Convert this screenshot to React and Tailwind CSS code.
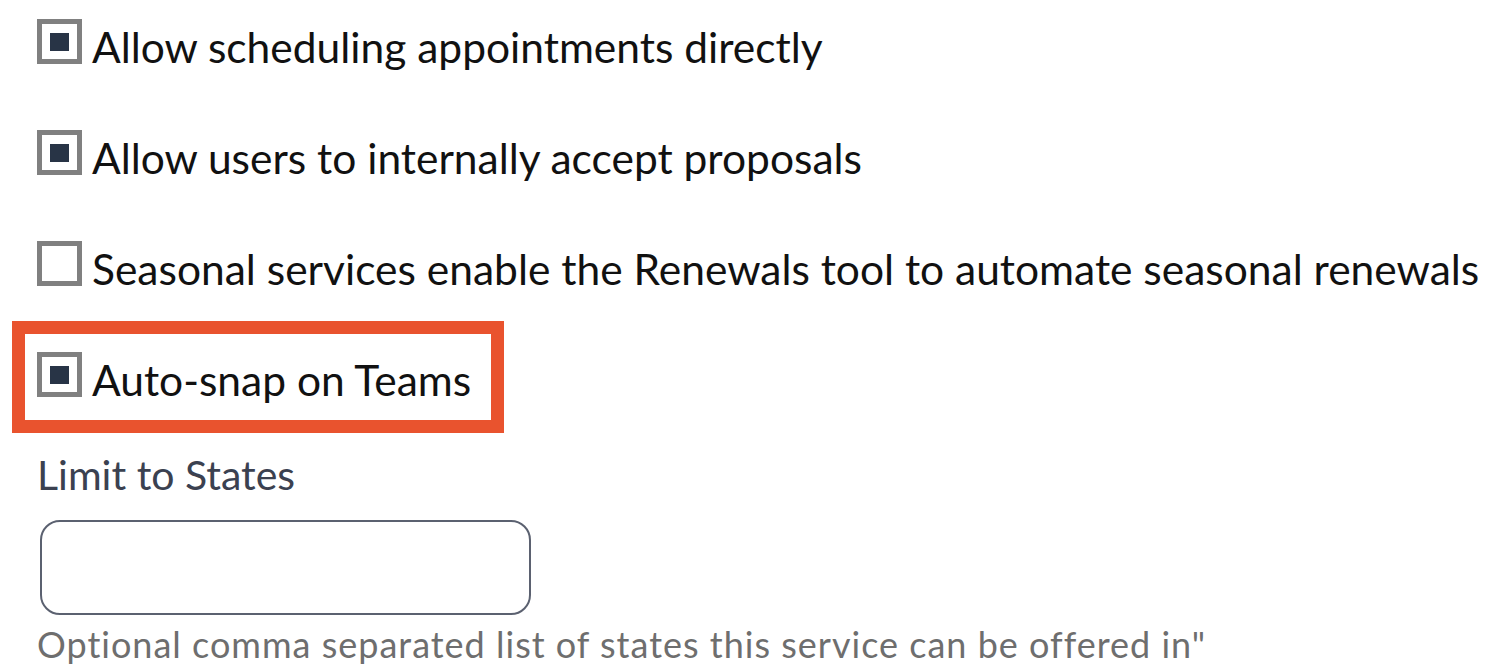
const options = [
  { label: "Allow scheduling appointments directly", checked: true },
  { label: "Allow users to internally accept proposals", checked: true },
  { label: "Seasonal services enable the Renewals tool to automate seasonal renewals", checked: false },
];

function CheckRow({ label, checked }) {
  return (
    <label className="flex items-start gap-[10px] h-[50px]">
      <span className="flex items-center justify-center w-[45px] h-[45px] shrink-0 border-[5px] border-[#808080] bg-white">
        {checked && <span className="block w-[19px] h-[18px] bg-[#283446]" />}
      </span>
      <span className="mt-[6px] text-[42.5px] leading-[44px] text-[#111111] whitespace-nowrap">{label}</span>
    </label>
  );
}

export default function App() {
  return (
    <div className="min-h-screen bg-white font-['Lato',sans-serif] pl-[37px] pt-[19px]">
      <div className="flex flex-col gap-[61px]">
        {options.map((o) => (
          <CheckRow key={o.label} label={o.label} checked={o.checked} />
        ))}
      </div>

      <div className="-ml-[25px] mt-[30px] w-fit border-[13px] border-[#e9532e] pl-[12px] pr-[20px] pt-[18px] pb-[18px]">
        <CheckRow label="Auto-snap on Teams" checked />
      </div>

      <div className="mt-[20px]">
        <div className="text-[41px] leading-[44px] text-[#3b4150]">Limit to States</div>
        <input
          type="text"
          className="block mt-[23px] ml-[3px] w-[491px] h-[95px] rounded-[20px] border-2 border-[#5b6170] bg-white outline-none"
        />
        <div className="mt-[7px] text-[36px] leading-[44px] tracking-[1px] text-[#6e6e6e] whitespace-nowrap">
          Optional comma separated list of states this service can be offered in"
        </div>
      </div>
    </div>
  );
}
